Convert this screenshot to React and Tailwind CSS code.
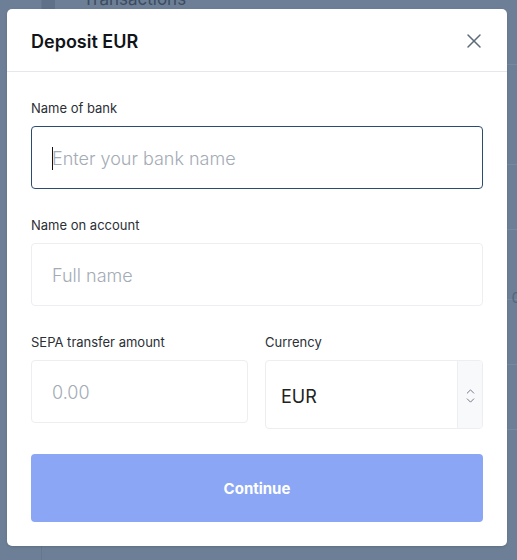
import { X, ChevronUp, ChevronDown } from "lucide-react";

const font = { fontFamily: "Inter, 'Noto Sans', sans-serif" };

const Field = ({ label, children, className = "" }) => (
  <div className={`flex flex-col ${className}`}>
    <label className="text-[13px] leading-[17px] text-[#2b2f36] mb-[9px]">
      {label}
    </label>
    {children}
  </div>
);

const inputBase =
  "w-full h-[63px] rounded-[4px] border bg-white pl-[20px] pt-[2px] text-[18px] font-light text-[#222] placeholder:text-[#a3abb5] outline-none";

export default function App() {
  return (
    <div
      className="relative w-[517px] h-[560px] overflow-hidden bg-[#6c7f96]"
      style={font}
    >
      {/* page behind the overlay */}
      <div className="flex h-full">
        <div className="w-[42px] border-r border-[#64778d]" />
        <div className="w-[13px] h-[9px] bg-[#5f7188]" />
        <div className="flex-1 flex flex-col">
          <div className="h-[9px] pl-[28px] overflow-hidden">
            <div className="text-[17px] leading-[17px] -mt-[9px] text-[#3c4b5e]">
              Transactions
            </div>
          </div>
          <div className="h-[56px] border-b border-[#7689a0]" />
          <div className="h-[100px] border-b border-[#7689a0]" />
          <div className="h-[65px] border-b border-[#7689a0]" />
          <div className="h-[70px] border-b border-[#7689a0] flex justify-end items-end">
            <span className="text-[15px] text-[#54667c] -mr-[4px] mb-[-10px]">0</span>
          </div>
          <div className="h-[65px] border-b border-[#7689a0]" />
          <div className="h-[65px] border-b border-[#7689a0]" />
        </div>
      </div>

      {/* modal */}
      <div className="absolute left-[7px] top-[9px] w-[500px] h-[537px] bg-white rounded-[5px] flex flex-col shadow-sm">
        <div className="h-[63px] flex items-center justify-between px-[24px] pt-[2px] border-b border-[#e4e7eb]">
          <h2 className="text-[18px] font-semibold text-[#111418]">Deposit EUR</h2>
          <X size={24} strokeWidth={1.5} className="text-[#5d6b79] -mr-[3px]" />
        </div>

        <div className="flex flex-col px-[24px] pt-[28px]">
          <Field label="Name of bank">
            <div className="relative">
              <input
                className={`${inputBase} border-[#2d4b70]`}
                placeholder="Enter your bank name"
              />
              <span className="absolute left-[21px] top-[21px] w-px h-[23px] bg-[#111]" />
            </div>
          </Field>

          <Field label="Name on account" className="mt-[28px]">
            <input className={`${inputBase} border-[#eceef2]`} placeholder="Full name" />
          </Field>

          <div className="flex gap-[17px] mt-[28px] items-start">
            <Field label="SEPA transfer amount" className="w-[217px]">
              <input className={`${inputBase} border-[#eceef2]`} placeholder="0.00" />
            </Field>
            <Field label="Currency" className="flex-1">
              <div className="flex h-[69px] rounded-[4px] border border-[#eceef2] overflow-hidden">
                <div className="flex-1 flex items-center pl-[15px] pt-[3px] text-[18px] text-[#222]">
                  EUR
                </div>
                <div className="w-[25px] bg-[#f8f9fb] border-l border-[#eceef2] flex flex-col items-center justify-center pt-[2px] text-[#5f6a76]">
                  <ChevronUp size={13} strokeWidth={1.6} className="-mb-[4px]" />
                  <ChevronDown size={13} strokeWidth={1.6} />
                </div>
              </div>
            </Field>
          </div>

          <button className="mt-[25px] h-[68px] w-full rounded-[4px] bg-[#8aa6f4] pt-[3px] text-white text-[15px] font-bold">
            Continue
          </button>
        </div>
      </div>
    </div>
  );
}
